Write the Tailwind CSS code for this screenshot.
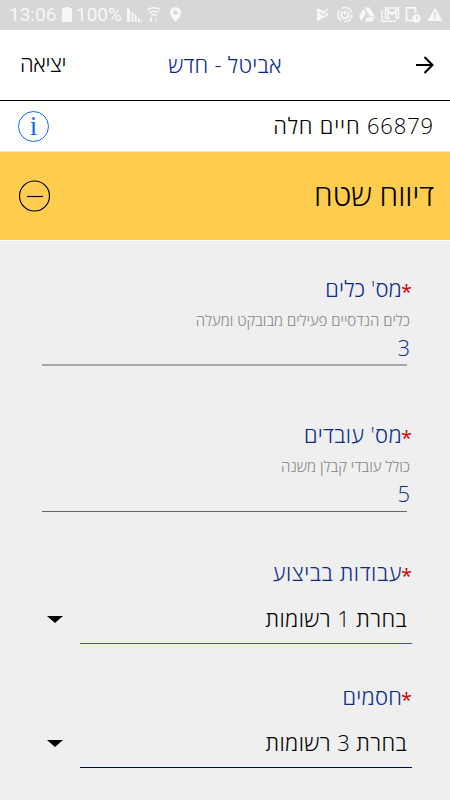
<!DOCTYPE html>
<html lang="he" dir="rtl">
<head>
<meta charset="utf-8">
<title>אביטל - חדש</title>
<script src="https://cdn.jsdelivr.net/npm/@tailwindcss/browser@4"></script>
</head>
<body class="flex h-[800px] w-[450px] flex-col overflow-hidden whitespace-nowrap bg-[#efefef] font-light text-black [font-family:'Open_Sans','Noto_Sans',sans-serif]">
<div dir="ltr" class="flex h-[30px] shrink-0 items-start justify-between bg-[#d7d7d7] text-[#f7f7f7]">
  <div class="flex h-[30px] items-center pl-[9px]">
    <span class="w-[53px] text-[19px] leading-[28px] font-normal [font-family:Roboto,sans-serif]">13:06</span>
    <svg class="h-[30px] w-[14px]" viewBox="0 0 14 30" fill="currentColor"><path d="M0 8h3V7h4v1h3v14H0z"/></svg>
    <span class="w-[51px] text-[19px] leading-[28px] font-normal [font-family:Roboto,sans-serif]">100%</span>
    <svg class="h-[30px] w-[60px]" viewBox="127 0 60 30" fill="currentColor"><path d="M127 7l3 2.700v12.300h-3zM131.500 11l2 2v9h-2zM134.700 14l2 2v6h-2zM138 17l2 2v3h-2zM141 20l2 2h-2z"/><g fill="none" stroke="currentColor" stroke-width="1.600"><path d="M147.500 10q6.500-4.500 13 0M149.500 12.700q4.500-3 9 0M151.500 15.300q2.500-1.600 5 0"/></g><path d="M150.500 17h1.500v3h1.200l-2 2.300-2-2.300h1.300z"/><path opacity=".5" d="M155.500 22h1.500v-3h1.200l-2-2.300-2 2.300h1.300z"/><path fill-rule="evenodd" d="M175.500 7a5.500 5.500 0 0 0-5.500 5.500c0 4 5.500 9.500 5.500 9.500s5.500-5.500 5.500-9.500a5.500 5.500 0 0 0-5.500-5.500zm0 3.200a2.200 2.200 0 1 1 0 4.400 2.200 2.200 0 0 1 0-4.400z"/></svg>
  </div>
  <svg class="h-[30px] w-[140px]" viewBox="310 0 140 30" fill="currentColor"><path d="M317 8l5.500 3 1 1.500 2-1.500 3.500 3.500L317 21.500z"/><path d="M319.500 12l4 3.500 6-6.500" fill="none" stroke="#d7d7d7" stroke-width="1.300"/><path d="M321.500 11l2.300 2 4-4" fill="none" stroke="currentColor" stroke-width="1.700"/><g fill="none" stroke="currentColor"><circle cx="345" cy="14.500" r="7" stroke-width="1.600" stroke-dasharray="12 2.660"/><path d="M343 11.700a3.600 3.600 0 1 0 4 0M345 10.500v4" stroke-width="2"/></g><path d="M364.500 7.500h5l5.500 9h-5zM363.600 8.700l2.500 4.200-4.600 8-2.500-4.400zM367.300 17.200h7.700l-2.500 4.300h-8z"/><path d="M385.500 18.500V8h13v10.500h-2.200M385.500 18.500h2.700v-7l3.800 3 3.800-3v7M385.500 8.500l6.500 5 6.500-5" fill="none" stroke="currentColor" stroke-width="1.700"/><path d="M382 10v11.300h14" fill="none" stroke="currentColor" stroke-width="1.500"/><path d="M415.500 13V7.800h-9v12.800h6" fill="none" stroke="currentColor" stroke-width="1.800"/><circle cx="416.500" cy="18.500" r="4.300"/><path d="M416.500 16v2.700h2.200" fill="none" stroke="#d7d7d7"/><path fill-rule="evenodd" d="M435 7.500l7.500 13.500h-15zM434.200 12v4.500h1.700V12zm0 5.800v1.700h1.700v-1.700z"/></svg>
</div>
<header class="grid h-[71px] shrink-0 grid-cols-[150px_1fr_150px] items-center border-b border-black bg-white px-4 text-[22px]">
  <svg class="h-[18px] w-[18px]" viewBox="0 0 18 18" fill="none" stroke="#000" stroke-width="2"><path d="M0 9h16.500M8.500 1l8 8-8 8"/></svg>
  <h1 class="pb-0.5 text-center tracking-[0.28px] text-[#0b2a8c]">אביטל - חדש</h1>
  <button class="pb-[3px] pl-1 text-left tracking-[-0.4px]">יציאה</button>
</header>
<div class="flex h-[51px] shrink-0 items-center justify-between border-b border-[#e8e8e8] bg-white pr-4 pl-[18px]">
  <span class="pb-0.5 text-[22px] tracking-[0.85px]">66879 חיים חלה</span>
  <span class="flex h-[31px] w-[31px] items-center justify-center rounded-full border border-[#0a6cff] text-[27px] leading-none text-[#0a6cff] font-normal [font-family:'Liberation_Serif',serif]">i</span>
</div>
<section class="flex h-[89px] shrink-0 items-center justify-between border-b border-white bg-[#ffcd4e] pr-4 pl-[18px]">
  <h2 class="pb-[3px] text-[30px] leading-10">דיווח שטח</h2>
  <svg class="h-8 w-8" viewBox="0 0 32 32" fill="none" stroke="#000" stroke-width="1.200"><circle cx="16.500" cy="16" r="15"/><path d="M9 16.500h16"/></svg>
</section>
<main class="flex flex-col pr-[38px]">
  <div class="flex h-[125px] flex-col pt-[31px]">
    <label class="flex h-8 items-center text-[22px] tracking-[0.15px] text-[#0b2a8c]"><span class="h-6 w-2.5 text-[20px] leading-8 font-normal tracking-normal text-[#d60000]">*</span>מס' כלים</label>
    <span class="h-[30px] pr-0.5 text-[15px] leading-[32px] text-[#858585]">כלים הנדסיים פעילים מבובקט ומעלה</span>
    <div class="mr-[5px] ml-[42px] h-8 border-b-2 border-[#a5a9a6] text-[22px] leading-[26px] text-[#0b2a8c]"><span class="-mr-[3px]">3</span></div>
  </div>
  <div class="flex h-[146px] flex-col pt-[52px]">
    <label class="flex h-8 items-center text-[22px] tracking-[0.35px] text-[#0b2a8c]"><span class="h-6 w-2.5 text-[20px] leading-8 font-normal tracking-normal text-[#d60000]">*</span>מס' עובדים</label>
    <span class="h-[30px] pr-0.5 text-[15px] leading-[32px] text-[#858585]">כולל עובדי קבלן משנה</span>
    <div class="mr-[5px] ml-[42px] h-8 border-b border-[#666] text-[22px] leading-[26px] text-[#0b2a8c]"><span class="-mr-[3px]">5</span></div>
  </div>
  <div class="flex h-[132px] flex-col pt-[44px]">
    <label class="flex h-8 items-center text-[22px] tracking-[0.6px] text-[#0b2a8c]"><span class="h-6 w-2.5 text-[20px] leading-8 font-normal tracking-normal text-[#d60000]">*</span>עבודות בביצוע</label>
    <div class="flex h-[56px] justify-between pl-[47px]">
      <div class="w-[332px] border-b border-[#4055a0] pr-[5px] text-[22px] leading-[60px] tracking-[0.4px]">בחרת 1 רשומות</div>
      <svg class="mt-[28px] h-[7px] w-4" viewBox="0 0 16 7"><path d="M0 0h16L8 7z"/></svg>
    </div>
  </div>
  <div class="flex h-[124px] flex-col pt-[36px]">
    <label class="flex h-8 items-center text-[22px] tracking-[0.2px] text-[#0b2a8c]"><span class="h-6 w-2.5 text-[20px] leading-8 font-normal tracking-normal text-[#d60000]">*</span>חסמים</label>
    <div class="flex h-[56px] justify-between pl-[47px]">
      <div class="w-[332px] border-b border-[#000080] pr-[5px] text-[22px] leading-[60px] tracking-[0.4px]">בחרת 3 רשומות</div>
      <svg class="mt-[28px] h-[7px] w-4" viewBox="0 0 16 7"><path d="M0 0h16L8 7z"/></svg>
    </div>
  </div>
</main>
</body>
</html>
